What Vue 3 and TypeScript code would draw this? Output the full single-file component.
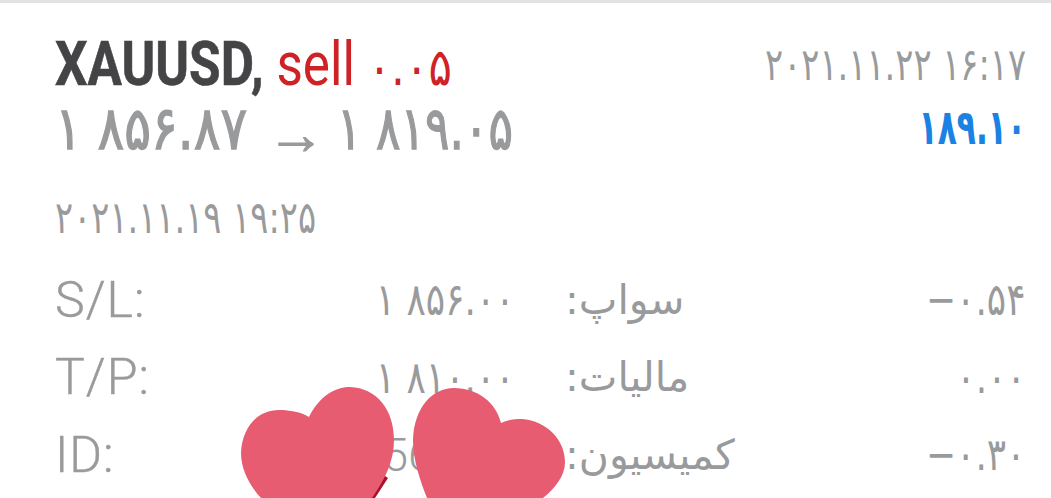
<template>
  <div class="page">
    <div class="top-line"></div>
    <div class="head">
      <div class="title">
        <b>XAUUSD,</b> <span class="sell">sell <span class="lot">۰.۰۵</span></span>
      </div>
      <div class="date close-date">۲۰۲۱.۱۱.۲۲ ۱۶:۱۷</div>
    </div>
    <div class="prices">
      <div class="price open-price">۱ ۸۵۶.۸۷</div>
      <span class="arrow">→</span>
      <div class="price">۱ ۸۱۹.۰۵</div>
      <div class="profit">۱۸۹.۱۰</div>
    </div>
    <div class="date open-date">۲۰۲۱.۱۱.۱۹ ۱۹:۲۵</div>
    <div class="rows">
      <div v-for="row in rows" :key="row.label" class="row">
        <div class="left">
          <span class="label">{{ row.label }}</span>
          <span class="value" :class="{ latin: row.label === 'ID:' }">{{ row.value }}</span>
        </div>
        <span class="fa-label" dir="rtl">{{ row.faLabel }}</span>
        <span class="amount">{{ row.amount }}</span>
      </div>
    </div>
    <svg class="hearts" viewBox="0 0 1051 498">
      <path d="M362 498 L382 474 L388 478 L375 498 Z" fill="#a8102c" />
      <path
        d="M309 417 C319 397 334 387 350 387 C377 388 394 410 394 440 C394 460 386 478 372 498 L261 498 C250 486 241 470 241 453 C242 428 257 410 279 410 C290 410 301 412 309 417 Z"
        fill="#e85c72"
      />
      <path
        d="M501 423 C507 420 514 419 522 419 C547 421 565 440 565 462 C565 476 555 488 543 498 L427 498 C420 480 413 460 413 440 C414 408 432 388 454 388 C477 388 496 402 501 423 Z"
        fill="#e85c72"
      />
    </svg>
  </div>
</template>

<script setup lang="ts">
const rows = [
  { label: "S/L:", value: "۱ ۸۵۶.۰۰", faLabel: "سواپ:", amount: "−۰.۵۴" },
  { label: "T/P:", value: "۱ ۸۱۰.۰۰", faLabel: "مالیات:", amount: "۰.۰۰" },
  { label: "ID:", value: "56123", faLabel: "کمیسیون:", amount: "−۰.۳۰" },
];
</script>

<style>
html,
body {
  margin: 0;
  background: #fff;
  overflow: hidden;
}
</style>

<style scoped>
.page {
  position: relative;
  width: 1051px;
  height: 498px;
  overflow: hidden;
  box-sizing: border-box;
  padding: 0 25px 0 55px;
  font-family: "DejaVu Sans", sans-serif;
  color: #999a9c;
  background: #fff;
}
.top-line {
  height: 3px;
  margin: 0 -25px 0 -55px;
  background: #e3e3e3;
}
.head,
.prices {
  display: flex;
  justify-content: space-between;
  align-items: center;
}
.head {
  margin-top: 30px;
  height: 64px;
}
.title {
  font-family: Roboto, sans-serif;
  font-size: 61px;
  line-height: 64px;
  white-space: nowrap;
  transform: scaleX(0.84);
  transform-origin: left center;
  color: #444446;
}
.title b {
  -webkit-text-stroke: 0.6px #444446;
}
.sell {
  color: #cf2226;
}
.lot {
  font-family: "DejaVu Sans", sans-serif;
  font-size: 52px;
}
.date {
  font-size: 45px;
  line-height: 40px;
  white-space: nowrap;
  transform: scaleX(0.75);
}
.close-date {
  transform-origin: right center;
}
.open-date {
  transform-origin: left center;
  margin-top: 39px;
}
.prices {
  height: 62px;
  justify-content: flex-start;
}
.price {
  width: 170px;
  font-size: 60px;
  line-height: 62px;
  -webkit-text-stroke: 1.4px #999a9c;
  white-space: nowrap;
  transform: scaleX(0.76);
  transform-origin: left center;
}
.open-price {
  width: 212px;
  transform: scaleX(0.83);
}
.arrow {
  width: 70px;
  font-family: "Liberation Sans", sans-serif;
  font-size: 58px;
  line-height: 62px;
  padding-top: 12px;
  -webkit-text-stroke: 1px #999a9c;
}
.profit {
  margin-left: auto;
  font-size: 49px;
  line-height: 62px;
  font-weight: 700;
  color: #1a82e2;
  transform: scaleX(0.64);
  transform-origin: right center;
}
.rows {
  margin-top: 23px;
}
.row {
  display: grid;
  grid-template-columns: 460px 1fr auto;
  column-gap: 50px;
  align-items: center;
  height: 77.5px;
}
.left {
  display: flex;
  justify-content: space-between;
  align-items: center;
}
.label {
  font-family: Roboto, sans-serif;
  font-weight: 300;
  font-size: 50px;
  letter-spacing: 1px;
  -webkit-text-stroke: 0.4px #999a9c;
}
.value,
.amount {
  font-size: 45px;
  white-space: nowrap;
  transform: scaleX(0.8);
  transform-origin: right center;
}
.value.latin {
  font-family: Roboto, sans-serif;
  font-size: 46px;
  font-weight: 300;
  margin-right: 5px;
  transform: none;
}
.fa-label {
  font-size: 41px;
  justify-self: start;
}
.hearts {
  position: absolute;
  inset: 0;
  width: 1051px;
  height: 498px;
}
</style>
